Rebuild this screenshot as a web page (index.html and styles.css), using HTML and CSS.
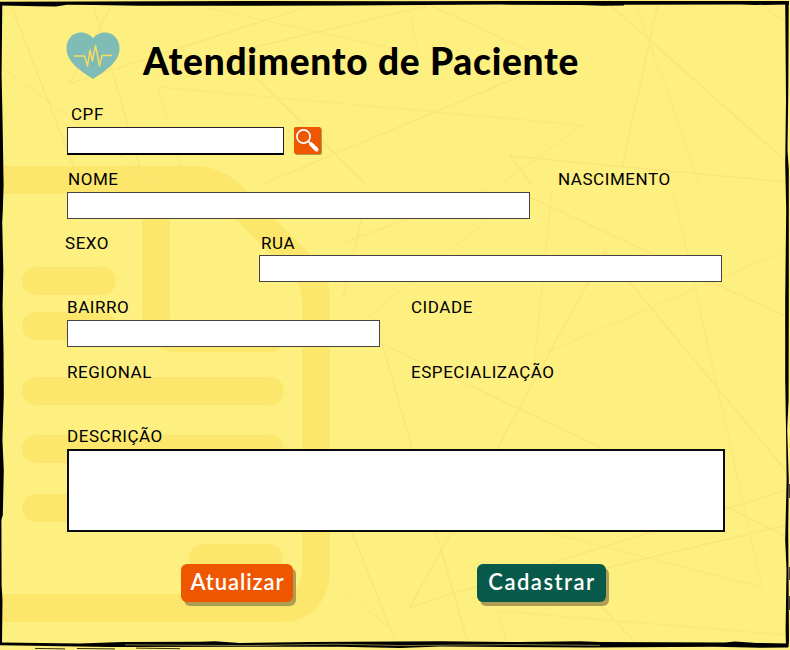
FILE: index.html
```html
<!DOCTYPE html>
<html lang="pt-BR">
<head>
<meta charset="utf-8">
<title>Atendimento de Paciente</title>
<link rel="stylesheet" href="styles.css">
</head>
<body>
<main class="screen">
  <svg class="backdrop" viewBox="0 0 790 650" aria-hidden="true">
    <g class="doc">
      <path d="M3 180H194Q216 180 233 197L303 267Q316 280 316 298V568Q316 608 278 608H3"/>
      <path d="M156 180V318Q156 338 180 338H271" stroke-linecap="round"/>
      <path d="M36 281H102M36 326H102M36 391H270M36 449H270M36 508H270M203 558H269" stroke-linecap="round"/>
    </g>
    <path class="line" d="M12 8L75 170M94 7L145 185M110 8L69 84L300 9M427 6L230 53L367 185M260 185L523 75M430 5L538 55M610 5L787 162M658 3L622 167M532 185L510 156L787 182M530 197L787 317M507 430L605 252L787 472M464 510L410 607L787 490M507 430L464 510M787 525L606 568M380 343L727 507L787 537M382 343L467 640M352 532L395 640M602 607L633 640M343 243L485 190M362 218L343 297"/>
    <path class="line faint" d="M207 8L400 50M0 66L160 185M185 185L158 87L582 125L500 185M410 12L418 53M637 7L700 185M760 5L787 23M552 190L535 357L787 250M673 190L762 587L550 533M342 588L403 640M506 640L498 611L787 635M490 218L340 340"/>
    <g class="frame">
      <path d="M0 1.8L90 1.5L260 1L400 1.3L560 1L789 1V4.5L755 5L740 4.6L624 4.8V5.6L604 5.8L580 5L500 4.6L340 5.5L140 5.8L95 5L67 4.7L56 6.6L38 6.3L0 5.5Z"/>
      <path d="M0 3H2.3L1.6 75L2.6 123L3.6 185L2.8 211L2.2 222L3.3 270L2.6 306L3.5 350L3.8 395L2.4 440L3.8 470L2.8 515L1.4 520L1.6 585L2.5 600L2 643H0Z"/>
      <path d="M785.2 3H788.7L788.3 90L787.5 150L788.8 170V300L788.6 400L787.2 430L788.8 480L788.2 530L789 640L788.5 647H786L785.6 630L786.5 570L785.2 540L786.6 480L786 430L785.2 380V300L786.2 210L785.2 165L786 100Z"/>
      <path d="M0 642.5L80 643.5L123 642L200 641.8L215 641.3L240 643L310 642L440 641.2L520 642L580 641.2L600 642L725 642.6L735 641.5L757 643L788 643.5V647.4L760 647.8L715 646.7L590 647.5L440 646.5L400 648L340 646.7L110 647L0 645.2Z"/>
    </g>
    <path class="frame-gap" d="M125 644.8L245 645.6L335 644.2L395 645.4M395 645.6L520 644.6L600 645.4"/>
    <path class="frame-scratch" d="M35 648.4L65 648.9M77 648.5L115 648.9M136 648.1L180 648.7M789.6 484V498M789.6 567V580M789.6 596V610"/>
  </svg>

  <header class="header">
    <svg class="heart" viewBox="0 0 54 48" aria-hidden="true">
      <path class="heart-body" d="M27 47C18 41 .5 31 .5 16.5C.5 7 7 .5 14.5 .5C20.5 .5 24.5 3 27 6.5C29.500 3 33.500 .5 39.500 .5C47 .5 53.500 7 53.500 16.500C53.500 31 36 41 27 47Z"/>
      <path class="heart-pulse" d="M8.500 24H18.500L21.500 34L24 18L26.300 29L29.500 13.500L33.500 34L36 23.500H45.500"/>
    </svg>
    <h1 class="title">Atendimento de Paciente</h1>
  </header>

  <form class="form">
    <div class="row tall">
      <div class="group cpf"><label class="label" for="cpf">CPF</label><input class="field" id="cpf"></div>
      <button class="search" type="button" aria-label="Buscar">
        <svg viewBox="0 0 27 27" aria-hidden="true">
          <circle class="lens" cx="9.500" cy="9.500" r="6.600"/>
          <path class="neck" d="M14.200 14.200L17 17"/>
          <path class="handle" d="M17.300 17.300L22.500 22.500"/>
        </svg>
      </button>
    </div>
    <div class="row">
      <div class="group nome"><label class="label" for="nome">NOME</label><input class="field" id="nome"></div>
      <div class="group nascimento"><span class="label">NASCIMENTO</span></div>
    </div>
    <div class="row">
      <div class="group sexo"><span class="label">SEXO</span></div>
      <div class="group rua"><label class="label" for="rua">RUA</label><input class="field" id="rua"></div>
    </div>
    <div class="row tall">
      <div class="group bairro"><label class="label" for="bairro">BAIRRO</label><input class="field" id="bairro"></div>
      <div class="group cidade"><span class="label">CIDADE</span></div>
    </div>
    <div class="row">
      <div class="group regional"><span class="label">REGIONAL</span></div>
      <div class="group especializacao"><span class="label">ESPECIALIZAÇÃO</span></div>
    </div>
    <div class="group descricao"><label class="label" for="descricao">DESCRIÇÃO</label><textarea class="field" id="descricao"></textarea></div>
    <div class="actions">
      <button class="btn update" type="button">Atualizar</button>
      <button class="btn create" type="button">Cadastrar</button>
    </div>
  </form>
</main>
</body>
</html>
```
FILE: styles.css
```css
* { box-sizing: border-box; }

body { margin: 0; background: #fdef80; }

.screen {
  position: relative;
  z-index: 0;
  width: 790px;
  height: 650px;
  overflow: hidden;
  background: #fdef80;
  color: #000;
}

/* Decorative document, lines and hand-drawn frame */
.backdrop { position: absolute; inset: 0; z-index: -1; width: 790px; height: 650px; }
.doc path { fill: none; stroke: #fce76c; stroke-width: 28; }
.line { fill: none; stroke: #fbe176; stroke-width: 1.3; opacity: .8; }
.line.faint { stroke: #f8e875; opacity: .75; }
.frame { fill: #000; }
.frame-gap { fill: none; stroke: #b5ab5c; stroke-width: .7; }
.frame-scratch { fill: none; stroke: #000; stroke-width: .8; }

.header { display: flex; height: 104px; padding: 32px 0 0 66px; }
.heart { width: 54px; height: 48px; flex: none; }
.heart-body { fill: #7fbcb5; }
.heart-pulse { fill: none; stroke: #fddc5c; stroke-width: 1.4; stroke-linejoin: round; stroke-linecap: round; }
.title {
  margin: 5px 0 0 23px;
  font: 900 37px/48px Lato, sans-serif;
  letter-spacing: .75px;
  white-space: nowrap;
}

.form { padding-left: 67px; }
.row { display: flex; height: 64px; }
.row.tall { height: 65px; }
.group { display: flex; flex-direction: column; }
.label {
  height: 20px;
  font: 400 17px/20px Roboto, sans-serif;
  letter-spacing: .55px;
  white-space: nowrap;
}
.field {
  display: block;
  width: 100%;
  height: 27px;
  margin: 2px 0 0;
  padding: 2px 6px;
  border: 1px solid #444;
  border-radius: 0;
  background: #fff;
  font: 16px Roboto, sans-serif;
  outline: 0;
  resize: none;
}

.cpf { width: 217px; }
.cpf .label { padding-left: 4px; }
.cpf .field { height: 28px; margin-top: 3px; border-color: #222; border-bottom: 2px solid #000; }
.nome { width: 463px; }
.nome .label { padding-left: 1px; }
.nome .field { margin-top: 3px; }
.nascimento { margin-left: 28px; }
.sexo { width: 193px; margin-left: -2px; }
.rua { width: 463px; margin-left: 1px; }
.rua .label { padding-left: 2px; }
.bairro { width: 313px; }
.bairro .field { margin-top: 3px; }
.cidade { margin-left: 31px; }
.regional { width: 344px; }
.descricao { width: 658px; }
.descricao .field { height: 83px; margin-top: 3px; border: 2px solid #0b0b0b; }

.search {
  width: 27px;
  height: 27px;
  margin: 23px 0 0 10px;
  padding: 0;
  border: 0;
  border-radius: 2px;
  background: #ef5600;
  box-shadow: 1px 1px 0 #ad9c51;
}
.search svg { display: block; width: 27px; height: 27px; fill: none; stroke: #fff; }
.lens { stroke-width: 1.7; }
.neck { stroke-width: 1.8; }
.handle { stroke-width: 4; stroke-linecap: round; }

.actions { display: flex; gap: 184px; padding: 32px 0 0 114px; }
.btn {
  height: 38px;
  padding: 0 0 2px 1px;
  border: 0;
  border-radius: 6px;
  box-shadow: 3px 4px 0 #ad9e53;
  color: #fff;
  font: 600 22px/36px Lato, sans-serif;
  white-space: nowrap;
}
.update { width: 112px; background: #ef5600; letter-spacing: .9px; }
.create { width: 129px; background: #075a49; letter-spacing: 1.5px; }
```
